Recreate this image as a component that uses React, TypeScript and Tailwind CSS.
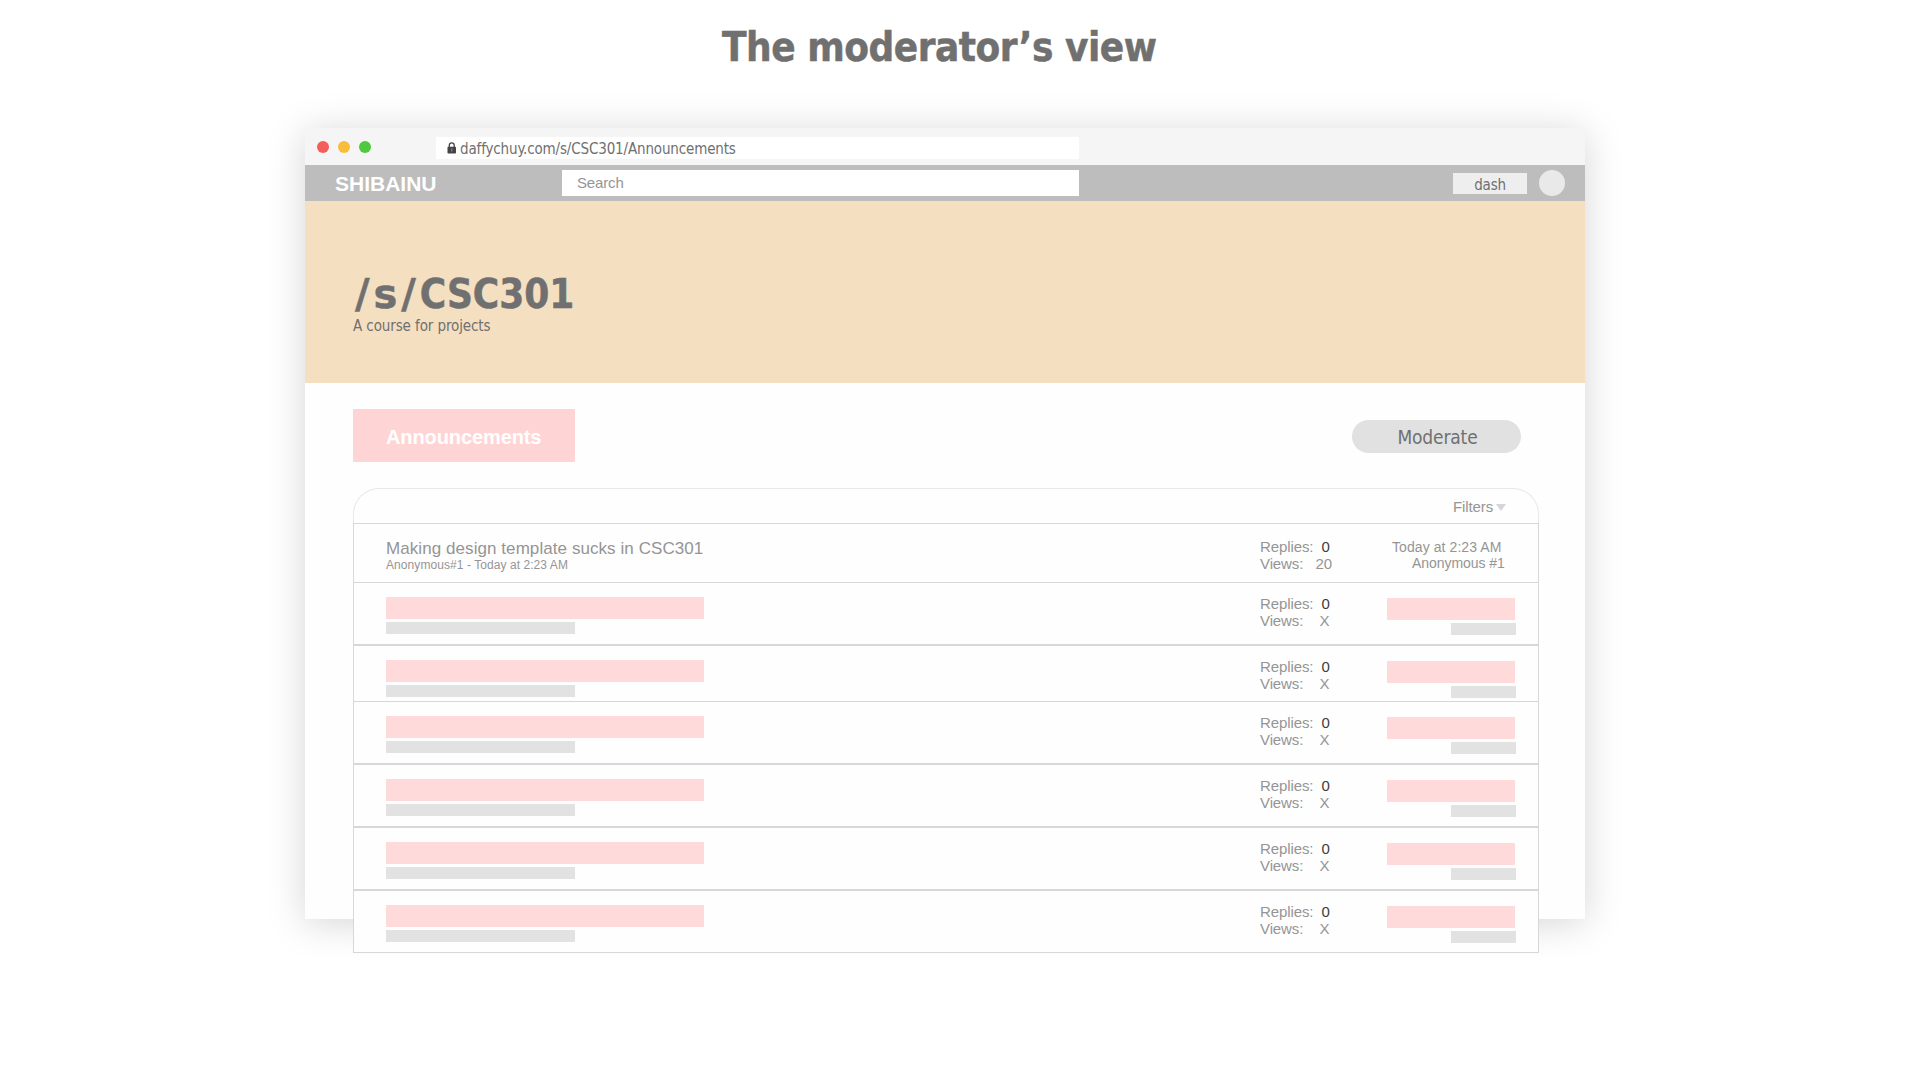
const tahoma = "font-['DejaVu_Sans_Condensed','DejaVu_Sans',sans-serif] text-[#707070]";

function Counts({ views, viewsPad }: { views: string; viewsPad: string }) {
  return (
    <div className="ml-auto w-[133px] shrink-0 text-[15px] leading-[17px] tracking-[-0.1px]">
      <div className="flex">
        <span className="w-[61.5px]">Replies:</span>
        <span className="text-[#3c3c3c]">0</span>
      </div>
      <div className="flex">
        <span className={viewsPad}>Views:</span>
        <span>{views}</span>
      </div>
    </div>
  );
}

function PlaceholderRow({ clipped = false }: { clipped?: boolean }) {
  return (
    <div
      className={
        clipped
          ? "flex h-[56px] items-start border border-b-0 border-[#d7d7d7] pl-8"
          : "flex h-[63px] items-start border border-[#d7d7d7] pl-8"
      }
    >
      <div className="pt-[14px]">
        <div className="h-[22px] w-[318px] bg-[#ffdada]" />
        <div className="mt-[3px] h-3 w-[189px] bg-[#e2e2e2]" />
      </div>
      <div className="ml-auto pt-3">
        <Counts views="X" viewsPad="w-[59.5px]" />
      </div>
      <div className="flex w-[145px] flex-col pt-[15px]">
        <div className="-ml-[6px] h-[22px] w-[128px] bg-[#ffdada]" />
        <div className="mt-[3px] ml-[58px] h-3 w-[65px] bg-[#e2e2e2]" />
      </div>
    </div>
  );
}

export default function App() {
  return (
    <div className="h-[1080px] w-[1920px] overflow-hidden bg-white font-['Liberation_Sans',Arial,sans-serif] whitespace-nowrap text-[#959595]">
      <h1 className={`${tahoma} h-[128px] pl-[722px] text-[40px] leading-[94px] font-bold tracking-[-0.47px] [-webkit-text-stroke:0.5px_#707070]`}>
        The moderator’s view
      </h1>

      <main className="ml-[305px] h-[791px] w-[1280px] bg-[#fefefe] shadow-[0_4px_36px_rgba(0,0,0,0.17)]">
        <div className="flex h-[37px] items-center bg-[#f5f5f5] pl-3">
          <div className="flex gap-[9px]">
            <span className="size-3 rounded-full bg-[#f45f5b]" />
            <span className="size-3 rounded-full bg-[#f9bd3a]" />
            <span className="size-3 rounded-full bg-[#50c840]" />
          </div>
          <div className={`${tahoma} ml-[65px] mt-[3px] flex h-[22px] w-[643px] items-center bg-white pl-[11px] text-[15px] leading-[22px] tracking-[-0.15px]`}>
            <svg width="10" height="12" viewBox="0 0 10 12" className="mr-[3px]">
              <path d="M2.3 5V3.4a2.4 2.4 0 0 1 4.9 0V5" fill="none" stroke="#444" strokeWidth="1.3" />
              <rect x="0.5" y="4.7" width="8.5" height="6.8" rx="0.8" fill="#444" />
              <path d="M4.3 6.6h1v3h-1z" fill="#999" />
            </svg>
            <span className="pt-[2px]">daffychuy.com/s/CSC301/Announcements</span>
          </div>
        </div>

        <nav className="flex h-9 items-center bg-[#bdbdbd] pl-[30px]">
          <span className="w-[227px] pt-px text-[21px] leading-9 font-bold text-white">SHIBAINU</span>
          <div className="h-[26px] w-[517px] bg-white pl-[15px] text-[15px] leading-[25px] tracking-[-0.15px]">Search</div>
          <div className={`${tahoma} ml-[374px] mt-px h-[21px] w-[74px] bg-[#eeeeee] text-center text-[15px] leading-[25px] tracking-[-0.2px]`}>
            dash
          </div>
          <span className="ml-3 size-[26px] rounded-full bg-[#e9e9e9]" />
        </nav>

        <header className={`${tahoma} h-[182px] bg-[#f5dfc1] pt-[73px] pl-12`}>
          <h2 className="flex pl-[2px] text-[40px] leading-10 font-bold [-webkit-text-stroke:0.5px_#707070]">
            <span className="font-['DejaVu_Sans',sans-serif] tracking-[3.9px]">/s/</span>
            <span>CSC301</span>
          </h2>
          <p className="text-[15px] leading-6 tracking-[-0.1px]">A course for projects</p>
        </header>

        <div className="flex items-start justify-between pt-[26px] pr-16 pl-12">
          <div className="h-[53px] w-[222px] bg-[#ffd4d4] pl-[33px] text-[20px] leading-[56px] font-bold tracking-[-0.1px] text-white">
            Announcements
          </div>
          <button className={`${tahoma} mt-[11px] h-[33px] w-[169px] rounded-full bg-[#e1e1e1] pl-[2px] text-[19px] leading-[34px] tracking-[-0.15px]`}>
            Moderate
          </button>
        </div>

        <section className="mt-[26px] ml-12 w-[1186px] bg-[#fefefe]">
          <div className="flex h-[35px] items-start rounded-t-[26px] border border-b-0 border-[#e8e8e8] pl-[1099px]">
            <span className="pt-2 text-[15px] leading-5 tracking-[-0.1px]">Filters</span>
            <svg width="10" height="7" viewBox="0 0 10 7" className="mt-[15px] ml-[3px]">
              <path d="M0 0h10L5 7z" fill="#d5d5d5" />
            </svg>
          </div>
          <div className="flex h-[59px] items-start border border-b-0 border-[#d7d7d7] pl-8">
            <div className="pt-4">
              <div className="text-[17px] leading-[18px] tracking-[0.07px]">Making design template sucks in CSC301</div>
              <div className="-mt-px text-[12px] leading-4 tracking-[0.07px]">Anonymous#1 - Today at 2:23 AM</div>
            </div>
            <div className="ml-auto pt-[14px]">
              <Counts views="20" viewsPad="w-[55.5px]" />
            </div>
            <div className="w-[145px] pt-[15px] text-[14px] leading-4">
              <div className="-ml-px tracking-[0.08px]">Today at 2:23 AM</div>
              <div className="ml-[19px] tracking-[-0.05px]">Anonymous #1</div>
            </div>
          </div>
          <PlaceholderRow />
          <PlaceholderRow clipped />
          <PlaceholderRow />
          <PlaceholderRow />
          <PlaceholderRow />
          <PlaceholderRow />
        </section>
      </main>
    </div>
  );
}
